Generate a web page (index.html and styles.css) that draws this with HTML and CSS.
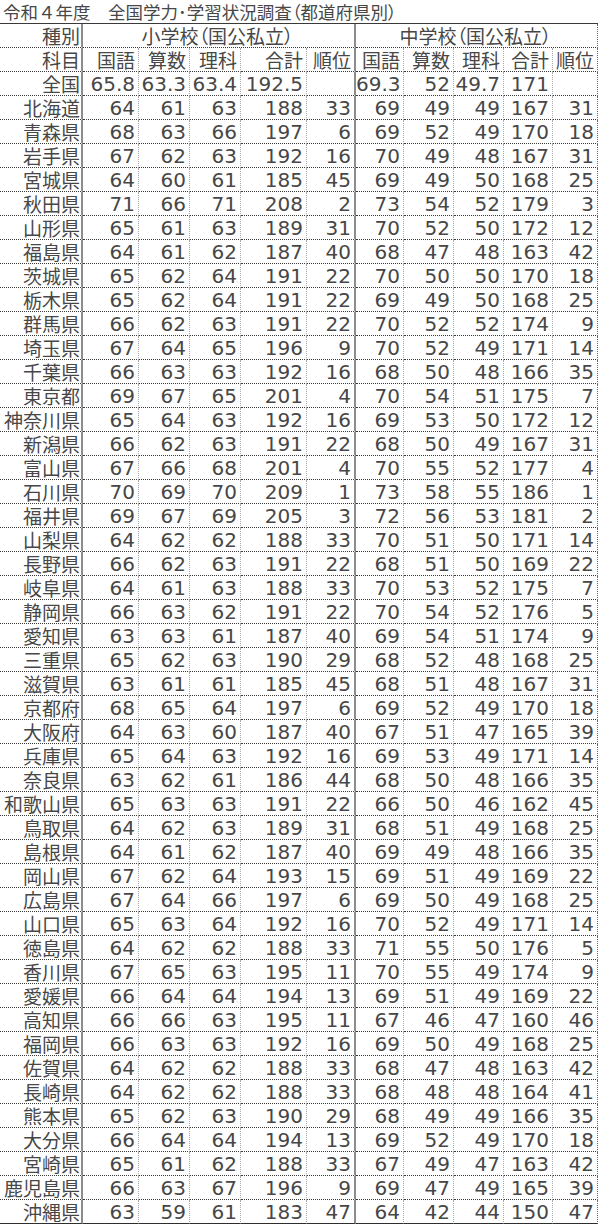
FILE: index.html
```html
<!DOCTYPE html>
<html lang="ja">
<head>
<meta charset="utf-8">
<title>令和４年度 全国学力・学習状況調査（都道府県別）</title>
<link rel="stylesheet" href="styles.css">
</head>
<body>
<div class="sheet">
<div class="title">令和４年度　全国学力･学習状況調査<span class="prop">（都道府県別）</span></div>
<table class="grid">
<colgroup>
<col class="c0"><col class="c1"><col class="c2"><col class="c3"><col class="c4"><col class="c5">
<col class="c6"><col class="c7"><col class="c8"><col class="c9"><col class="c10">
</colgroup>
<thead>
<tr><td class="lbl">種別</td><td class="grp sep" colspan="5">小学校（国公私立）</td><td class="grp last" colspan="5">中学校（国公私立）</td></tr>
<tr><td class="lbl">科目</td><td class="jp">国語</td><td class="jp">算数</td><td class="jp">理科</td><td class="jp">合計</td><td class="jp sep">順位</td><td class="jp">国語</td><td class="jp">算数</td><td class="jp">理科</td><td class="jp">合計</td><td class="jp last">順位</td></tr>
</thead>
<tbody>
<tr><td class="lbl">全国</td><td>65.8</td><td>63.3</td><td>63.4</td><td>192.5</td><td class="sep"></td><td>69.3</td><td>52</td><td>49.7</td><td>171</td><td class="last"></td></tr>
<tr><td class="lbl">北海道</td><td>64</td><td>61</td><td>63</td><td>188</td><td class="sep">33</td><td>69</td><td>49</td><td>49</td><td>167</td><td class="last">31</td></tr>
<tr><td class="lbl">青森県</td><td>68</td><td>63</td><td>66</td><td>197</td><td class="sep">6</td><td>69</td><td>52</td><td>49</td><td>170</td><td class="last">18</td></tr>
<tr><td class="lbl">岩手県</td><td>67</td><td>62</td><td>63</td><td>192</td><td class="sep">16</td><td>70</td><td>49</td><td>48</td><td>167</td><td class="last">31</td></tr>
<tr><td class="lbl">宮城県</td><td>64</td><td>60</td><td>61</td><td>185</td><td class="sep">45</td><td>69</td><td>49</td><td>50</td><td>168</td><td class="last">25</td></tr>
<tr><td class="lbl">秋田県</td><td>71</td><td>66</td><td>71</td><td>208</td><td class="sep">2</td><td>73</td><td>54</td><td>52</td><td>179</td><td class="last">3</td></tr>
<tr><td class="lbl">山形県</td><td>65</td><td>61</td><td>63</td><td>189</td><td class="sep">31</td><td>70</td><td>52</td><td>50</td><td>172</td><td class="last">12</td></tr>
<tr><td class="lbl">福島県</td><td>64</td><td>61</td><td>62</td><td>187</td><td class="sep">40</td><td>68</td><td>47</td><td>48</td><td>163</td><td class="last">42</td></tr>
<tr><td class="lbl">茨城県</td><td>65</td><td>62</td><td>64</td><td>191</td><td class="sep">22</td><td>70</td><td>50</td><td>50</td><td>170</td><td class="last">18</td></tr>
<tr><td class="lbl">栃木県</td><td>65</td><td>62</td><td>64</td><td>191</td><td class="sep">22</td><td>69</td><td>49</td><td>50</td><td>168</td><td class="last">25</td></tr>
<tr><td class="lbl">群馬県</td><td>66</td><td>62</td><td>63</td><td>191</td><td class="sep">22</td><td>70</td><td>52</td><td>52</td><td>174</td><td class="last">9</td></tr>
<tr><td class="lbl">埼玉県</td><td>67</td><td>64</td><td>65</td><td>196</td><td class="sep">9</td><td>70</td><td>52</td><td>49</td><td>171</td><td class="last">14</td></tr>
<tr><td class="lbl">千葉県</td><td>66</td><td>63</td><td>63</td><td>192</td><td class="sep">16</td><td>68</td><td>50</td><td>48</td><td>166</td><td class="last">35</td></tr>
<tr><td class="lbl">東京都</td><td>69</td><td>67</td><td>65</td><td>201</td><td class="sep">4</td><td>70</td><td>54</td><td>51</td><td>175</td><td class="last">7</td></tr>
<tr><td class="lbl">神奈川県</td><td>65</td><td>64</td><td>63</td><td>192</td><td class="sep">16</td><td>69</td><td>53</td><td>50</td><td>172</td><td class="last">12</td></tr>
<tr><td class="lbl">新潟県</td><td>66</td><td>62</td><td>63</td><td>191</td><td class="sep">22</td><td>68</td><td>50</td><td>49</td><td>167</td><td class="last">31</td></tr>
<tr><td class="lbl">富山県</td><td>67</td><td>66</td><td>68</td><td>201</td><td class="sep">4</td><td>70</td><td>55</td><td>52</td><td>177</td><td class="last">4</td></tr>
<tr><td class="lbl">石川県</td><td>70</td><td>69</td><td>70</td><td>209</td><td class="sep">1</td><td>73</td><td>58</td><td>55</td><td>186</td><td class="last">1</td></tr>
<tr><td class="lbl">福井県</td><td>69</td><td>67</td><td>69</td><td>205</td><td class="sep">3</td><td>72</td><td>56</td><td>53</td><td>181</td><td class="last">2</td></tr>
<tr><td class="lbl">山梨県</td><td>64</td><td>62</td><td>62</td><td>188</td><td class="sep">33</td><td>70</td><td>51</td><td>50</td><td>171</td><td class="last">14</td></tr>
<tr><td class="lbl">長野県</td><td>66</td><td>62</td><td>63</td><td>191</td><td class="sep">22</td><td>68</td><td>51</td><td>50</td><td>169</td><td class="last">22</td></tr>
<tr><td class="lbl">岐阜県</td><td>64</td><td>61</td><td>63</td><td>188</td><td class="sep">33</td><td>70</td><td>53</td><td>52</td><td>175</td><td class="last">7</td></tr>
<tr><td class="lbl">静岡県</td><td>66</td><td>63</td><td>62</td><td>191</td><td class="sep">22</td><td>70</td><td>54</td><td>52</td><td>176</td><td class="last">5</td></tr>
<tr><td class="lbl">愛知県</td><td>63</td><td>63</td><td>61</td><td>187</td><td class="sep">40</td><td>69</td><td>54</td><td>51</td><td>174</td><td class="last">9</td></tr>
<tr><td class="lbl">三重県</td><td>65</td><td>62</td><td>63</td><td>190</td><td class="sep">29</td><td>68</td><td>52</td><td>48</td><td>168</td><td class="last">25</td></tr>
<tr><td class="lbl">滋賀県</td><td>63</td><td>61</td><td>61</td><td>185</td><td class="sep">45</td><td>68</td><td>51</td><td>48</td><td>167</td><td class="last">31</td></tr>
<tr><td class="lbl">京都府</td><td>68</td><td>65</td><td>64</td><td>197</td><td class="sep">6</td><td>69</td><td>52</td><td>49</td><td>170</td><td class="last">18</td></tr>
<tr><td class="lbl">大阪府</td><td>64</td><td>63</td><td>60</td><td>187</td><td class="sep">40</td><td>67</td><td>51</td><td>47</td><td>165</td><td class="last">39</td></tr>
<tr><td class="lbl">兵庫県</td><td>65</td><td>64</td><td>63</td><td>192</td><td class="sep">16</td><td>69</td><td>53</td><td>49</td><td>171</td><td class="last">14</td></tr>
<tr><td class="lbl">奈良県</td><td>63</td><td>62</td><td>61</td><td>186</td><td class="sep">44</td><td>68</td><td>50</td><td>48</td><td>166</td><td class="last">35</td></tr>
<tr><td class="lbl">和歌山県</td><td>65</td><td>63</td><td>63</td><td>191</td><td class="sep">22</td><td>66</td><td>50</td><td>46</td><td>162</td><td class="last">45</td></tr>
<tr><td class="lbl">鳥取県</td><td>64</td><td>62</td><td>63</td><td>189</td><td class="sep">31</td><td>68</td><td>51</td><td>49</td><td>168</td><td class="last">25</td></tr>
<tr><td class="lbl">島根県</td><td>64</td><td>61</td><td>62</td><td>187</td><td class="sep">40</td><td>69</td><td>49</td><td>48</td><td>166</td><td class="last">35</td></tr>
<tr><td class="lbl">岡山県</td><td>67</td><td>62</td><td>64</td><td>193</td><td class="sep">15</td><td>69</td><td>51</td><td>49</td><td>169</td><td class="last">22</td></tr>
<tr><td class="lbl">広島県</td><td>67</td><td>64</td><td>66</td><td>197</td><td class="sep">6</td><td>69</td><td>50</td><td>49</td><td>168</td><td class="last">25</td></tr>
<tr><td class="lbl">山口県</td><td>65</td><td>63</td><td>64</td><td>192</td><td class="sep">16</td><td>70</td><td>52</td><td>49</td><td>171</td><td class="last">14</td></tr>
<tr><td class="lbl">徳島県</td><td>64</td><td>62</td><td>62</td><td>188</td><td class="sep">33</td><td>71</td><td>55</td><td>50</td><td>176</td><td class="last">5</td></tr>
<tr><td class="lbl">香川県</td><td>67</td><td>65</td><td>63</td><td>195</td><td class="sep">11</td><td>70</td><td>55</td><td>49</td><td>174</td><td class="last">9</td></tr>
<tr><td class="lbl">愛媛県</td><td>66</td><td>64</td><td>64</td><td>194</td><td class="sep">13</td><td>69</td><td>51</td><td>49</td><td>169</td><td class="last">22</td></tr>
<tr><td class="lbl">高知県</td><td>66</td><td>66</td><td>63</td><td>195</td><td class="sep">11</td><td>67</td><td>46</td><td>47</td><td>160</td><td class="last">46</td></tr>
<tr><td class="lbl">福岡県</td><td>66</td><td>63</td><td>63</td><td>192</td><td class="sep">16</td><td>69</td><td>50</td><td>49</td><td>168</td><td class="last">25</td></tr>
<tr><td class="lbl">佐賀県</td><td>64</td><td>62</td><td>62</td><td>188</td><td class="sep">33</td><td>68</td><td>47</td><td>48</td><td>163</td><td class="last">42</td></tr>
<tr><td class="lbl">長崎県</td><td>64</td><td>62</td><td>62</td><td>188</td><td class="sep">33</td><td>68</td><td>48</td><td>48</td><td>164</td><td class="last">41</td></tr>
<tr><td class="lbl">熊本県</td><td>65</td><td>62</td><td>63</td><td>190</td><td class="sep">29</td><td>68</td><td>49</td><td>49</td><td>166</td><td class="last">35</td></tr>
<tr><td class="lbl">大分県</td><td>66</td><td>64</td><td>64</td><td>194</td><td class="sep">13</td><td>69</td><td>52</td><td>49</td><td>170</td><td class="last">18</td></tr>
<tr><td class="lbl">宮崎県</td><td>65</td><td>61</td><td>62</td><td>188</td><td class="sep">33</td><td>67</td><td>49</td><td>47</td><td>163</td><td class="last">42</td></tr>
<tr><td class="lbl">鹿児島県</td><td>66</td><td>63</td><td>67</td><td>196</td><td class="sep">9</td><td>69</td><td>47</td><td>49</td><td>165</td><td class="last">39</td></tr>
<tr class="end"><td class="lbl">沖縄県</td><td>63</td><td>59</td><td>61</td><td>183</td><td class="sep">47</td><td>64</td><td>42</td><td>44</td><td>150</td><td class="last">47</td></tr>
</tbody>
</table>
</div>
</body>
</html>
```

FILE: styles.css
```css
html, body {
  margin: 0;
  padding: 0;
  background: #ffffff;
}

.sheet {
  width: 598px;
  color: #474747;
  font-family: "DejaVu Sans", "Noto Sans CJK JP", sans-serif;
}

.title {
  box-sizing: border-box;
  height: 24px;
  padding-left: 3px;
  border-bottom: 1px solid #3a3a3a;
  font-family: "Noto Sans CJK JP", sans-serif;
  font-size: 17.5px;
  line-height: 23px;
  white-space: nowrap;
}

.title .prop {
  font-feature-settings: "palt" 1;
}

.grid {
  border-collapse: separate;
  border-spacing: 0;
  table-layout: fixed;
  width: 598px;
}

.c0 { width: 83px; }
.c1 { width: 56px; }
.c2 { width: 51px; }
.c3 { width: 51px; }
.c4 { width: 66px; }
.c5 { width: 49px; }
.c6 { width: 48px; }
.c7 { width: 50px; }
.c8 { width: 50px; }
.c9 { width: 49px; }
.c10 { width: 45px; }

.grid td {
  box-sizing: border-box;
  height: 24px;
  padding: 1px 3px 0 0;
  border-bottom: 1px dotted #3a3a3a;
  border-right: 1px dotted #a8a8a8;
  text-align: right;
  font-size: 20px;
  line-height: 22px;
  white-space: nowrap;
  vertical-align: middle;
}

.grid td.lbl,
.grid td.jp,
.grid td.grp {
  font-family: "Noto Sans CJK JP", sans-serif;
  font-size: 19px;
}

.grid td.lbl {
  padding-right: 1px;
  border-right: 2px solid #8c8c8c;
}

.grid td.grp {
  text-align: center;
  padding-right: 2px;
  font-feature-settings: "palt" 1;
}

.grid td.sep {
  border-right: 2px solid #8c8c8c;
}

.grid td.last {
  border-right: 1px dotted #6a6a6a;
}

.grid tr.end td {
  border-bottom: 1px solid #2e2e2e;
}
```
